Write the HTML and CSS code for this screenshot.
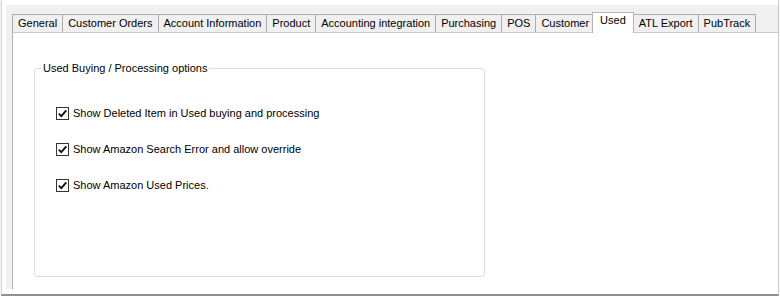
FILE: index.html
```html
<!DOCTYPE html>
<html lang="en">
<head>
    <meta charset="UTF-8">
    <meta name="viewport" content="width=device-width, initial-scale=1.0">
    <title>Options - Used</title>
    <link rel="stylesheet" href="styles.css">
</head>
<body>
    <div class="window">
        <div class="dialog">
            <ul class="tabs">
                <li class="tab">General</li>
                <li class="tab">Customer Orders</li>
                <li class="tab">Account Information</li>
                <li class="tab">Product</li>
                <li class="tab">Accounting integration</li>
                <li class="tab">Purchasing</li>
                <li class="tab">POS</li>
                <li class="tab">Customer</li>
                <li class="tab active">Used</li>
                <li class="tab">ATL Export</li>
                <li class="tab">PubTrack</li>
            </ul>

            <div class="tab-page">
                <fieldset class="group">
                    <legend>Used Buying / Processing options</legend>
                    <div class="options">
                        <label class="option">
                            <span class="check">
                                <svg width="11" height="11" viewBox="0 0 11 11"><path d="M1.8 5.6 L4.3 8.2 L9.3 2.4" fill="none" stroke="#111" stroke-width="1.9"/></svg>
                            </span>
                            Show Deleted Item in Used buying and processing
                        </label>
                        <label class="option">
                            <span class="check">
                                <svg width="11" height="11" viewBox="0 0 11 11"><path d="M1.8 5.6 L4.3 8.2 L9.3 2.4" fill="none" stroke="#111" stroke-width="1.9"/></svg>
                            </span>
                            Show Amazon Search Error and allow override
                        </label>
                        <label class="option">
                            <span class="check">
                                <svg width="11" height="11" viewBox="0 0 11 11"><path d="M1.8 5.6 L4.3 8.2 L9.3 2.4" fill="none" stroke="#111" stroke-width="1.9"/></svg>
                            </span>
                            Show Amazon Used Prices.
                        </label>
                    </div>
                </fieldset>
            </div>
        </div>
    </div>
</body>
</html>
```

FILE: styles.css
```css
body {
    font-family: "Liberation Sans", Arial, sans-serif;
    font-size: 11px;
    color: #000;
    margin: 0;
    background-color: #fff;
}

.window {
    margin: 0 1px;
    height: 289px;
    padding-top: 5px;
    border-left: 1px solid #d6d6d6;
    border-right: 1px solid #cfcfcf;
    border-bottom: 2px solid #8f8f8f;
    box-shadow: 0 1px 2px rgba(0, 0, 0, 0.15);
    background-color: #fff;
}

.dialog {
    margin-left: 4px;
    height: 284px;
    padding: 9px 0 0 6px;
    box-sizing: border-box;
    background-color: #f0f0f0;
    overflow: hidden;
}

.tabs {
    list-style: none;
    margin: 0;
    padding: 0;
    height: 18px;
    display: flex;
    align-items: flex-end;
    position: relative;
    z-index: 1;
}

.tab {
    height: 17px;
    line-height: 17px;
    padding: 0 5px;
    margin-right: -1px;
    border: 1px solid #adadad;
    border-bottom: none;
    background-color: #f0f0f0;
    white-space: nowrap;
}

.tab.active {
    height: 20px;
    line-height: 15px;
    margin: 0 -1px -1px -2px;
    padding: 0 7px;
    background-color: #fff;
    border-color: #b4b4b4;
    position: relative;
}

.tab.active + .tab {
    margin-left: 0;
}

.tab-page {
    height: 270px;
    border-top: 1px solid #c9c9c9;
    border-left: 1px solid #b3b3b3;
    background-color: #fff;
    padding: 29px 0 0 21px;
    box-sizing: border-box;
}

.group {
    width: 451px;
    height: 215px;
    margin: 0;
    padding: 0 0 0 6px;
    box-sizing: border-box;
    border: 1px solid #dcdfe3;
    border-radius: 3px;
}

.group legend {
    padding: 0 2px;
    line-height: 13px;
}

.options {
    display: flex;
    flex-direction: column;
    gap: 20px;
    padding: 30px 0 0 15px;
}

.option {
    display: flex;
    align-items: center;
    gap: 4px;
    height: 16px;
}

.check {
    width: 11px;
    height: 11px;
    border: 1px solid #333;
    background-color: #fff;
    display: flex;
}
```
